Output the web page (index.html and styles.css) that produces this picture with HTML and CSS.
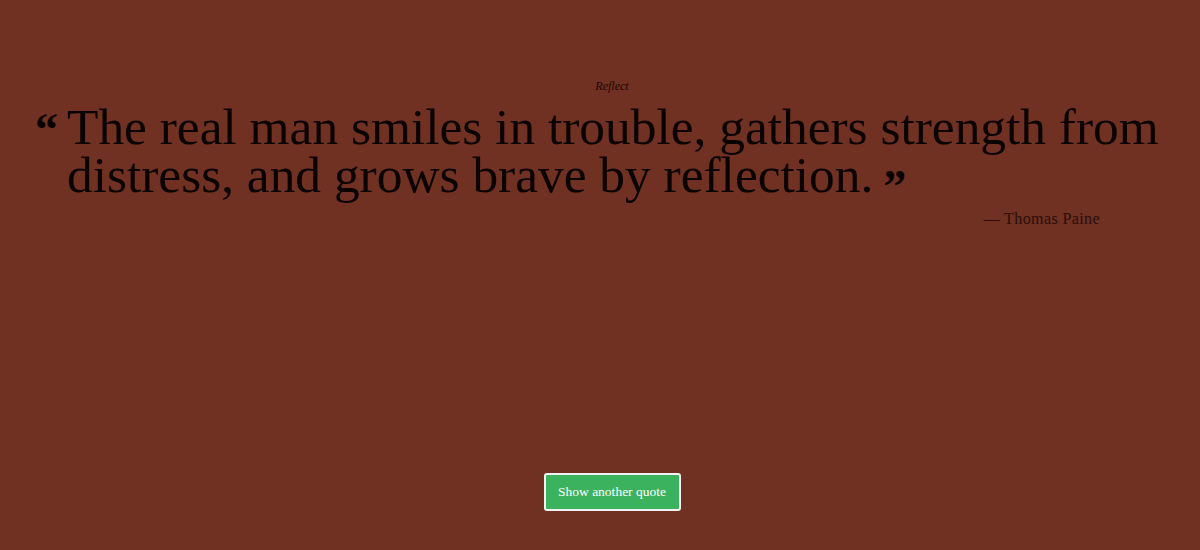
FILE: index.html
```html
<!DOCTYPE html>
<html>
<head>
<meta charset="utf-8">
<link rel="stylesheet" href="styles.css">
</head>
<body>
<main class="page">
  <section class="quote-box">
    <div class="topic">Reflect</div>
    <div class="quote-row">
      <span class="mark mark-open">&#8220;</span>
      <blockquote class="quote-text">The real man smiles in trouble, gathers strength from distress, and grows brave by reflection.<span class="mark mark-close">&#8221;</span></blockquote>
    </div>
    <div class="author">&mdash; Thomas Paine</div>
  </section>
  <div class="actions">
    <button class="btn">Show another quote</button>
  </div>
</main>
</body>
</html>
```
FILE: styles.css
```css
html, body {
  margin: 0;
  padding: 0;
  height: 100%;
}
body {
  background: #703022;
  font-family: "Liberation Serif", "DejaVu Serif", serif;
  color: #0a0302;
}
.page {
  height: 550px;
  box-sizing: border-box;
  padding-left: 24px;
  display: flex;
  flex-direction: column;
  align-items: center;
}
.quote-box {
  width: 1150px;
  padding-top: 78px;
}
.topic {
  text-align: center;
  font-style: italic;
  font-size: 12px;
  line-height: 16px;
  color: #1a0805;
}
.quote-row {
  display: flex;
  align-items: flex-start;
  margin-top: 9px;
}
.mark {
  font-family: "Liberation Serif", serif;
  font-weight: bold;
  line-height: 1;
}
.mark-open {
  width: 30px;
  font-size: 46px;
  padding-top: 4px;
  text-indent: -2px;
}
.mark-close {
  font-size: 46px;
  margin-left: 10px;
  line-height: 0;
  vertical-align: -10px;
}
.quote-text {
  margin: 0;
  font-size: 51.4px;
  line-height: 48px;
  flex: 1;
}
.author {
  text-align: right;
  margin-top: 11px;
  padding-right: 87px;
  font-size: 16px;
  letter-spacing: 0.4px;
  color: #2a0e08;
}
.actions {
  margin-top: auto;
  margin-bottom: 39px;
}
.btn {
  background: #3bb25e;
  color: #fff;
  border: 2px solid #f2f2f2;
  border-radius: 3px;
  font-family: "Liberation Serif", serif;
  font-size: 13.5px;
  width: 137px;
  height: 38px;
  padding: 0;
  cursor: pointer;
}
```
